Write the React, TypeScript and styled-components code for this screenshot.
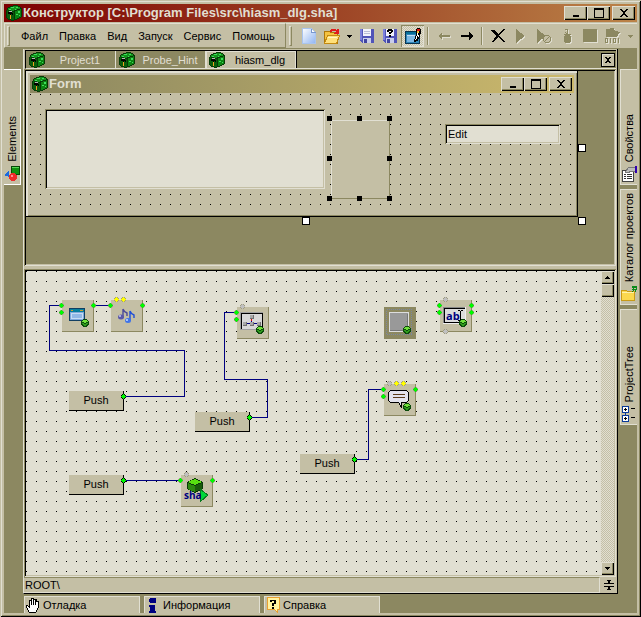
import React from "react";
import styled, { createGlobalStyle, css } from "styled-components";

const face = "#c4bfa5";
const light = "#e1dfd2";
const dark = "#8c8861";
const navy = "#000080";

const sunken = css`
  padding: 2px;
  box-shadow: inset 1px 1px ${dark}, inset -1px -1px ${light}, inset 2px 2px #000, inset -2px -2px ${face};
`;
const raised = css`
  background: ${face};
  box-shadow: inset 1px 1px ${light}, inset -1px -1px #000, inset -2px -2px ${dark};
`;

const GlobalStyle = createGlobalStyle`
  * { box-sizing: border-box; }
  body { margin: 0; background: ${face}; }
  body, button, input, textarea {
    font-family: "Liberation Sans", sans-serif;
    font-size: 11px;
    line-height: 16px;
    color: #000;
  }
  button { border: 0; padding: 0; margin: 0; background: none; }
  svg { display: block; flex: none; shape-rendering: crispEdges; }
`;

const Window = styled.div`
  display: flex;
  flex-direction: column;
  height: 100vh;
  min-height: 480px;
  padding: 4px;
  background: ${face};
  box-shadow: inset 1px 1px ${face}, inset -1px -1px #000, inset 2px 2px ${light}, inset -2px -2px ${dark};
`;
const TitleBar = styled.header<{ $inner?: boolean }>`
  display: flex;
  align-items: center;
  flex: none;
  height: 18px;
  gap: 1px;
  padding: 0 2px;
  color: ${light};
  background: ${(p) => (p.$inner
    ? "linear-gradient(90deg, #8c8861, #ccb96c)"
    : "linear-gradient(90deg, #7d0000, #bb8348)")};
`;
const Title = styled.h1`
  flex: 1;
  margin: 0;
  overflow: hidden;
  white-space: nowrap;
  font: bold 13px/18px "Liberation Sans", sans-serif;
`;
const CaptionButtons = styled.div`
  display: flex;
`;
const CaptionButton = styled.button`
  ${raised}
  display: grid;
  place-items: center;
  width: 23px;
  height: 14px;
  &:last-child { margin-left: 2px; }
`;

const ToolRow = styled.div`
  display: flex;
  flex: none;
  height: 27px;
  padding-top: 1px;
  border-bottom: 1px solid ${dark};
`;
const MenuBar = styled.nav`
  display: flex;
  align-items: center;
  flex: none;
  gap: 11px;
  width: 282px;
  border: 1px solid ${light};
  border-right-color: ${dark};
  border-bottom-color: ${dark};
`;
const Grip = styled.span`
  flex: none;
  width: 3px;
  height: 20px;
  margin: 0 0 0 2px;
  border: 1px solid ${light};
  border-right-color: ${dark};
  border-bottom-color: ${dark};
`;
const MenuItem = styled.button`
  padding-top: 1px;
  white-space: nowrap;
`;
const ToolBar = styled.div`
  display: flex;
  flex: 1;
  align-items: center;
  padding-left: 1px;
  border-top: 1px solid ${light};
  ${Grip} { margin-right: 5px; }
`;
const Tool = styled.button<{ $pressed?: boolean; $narrow?: boolean }>`
  display: grid;
  place-items: center;
  flex: none;
  width: ${(p) => (p.$narrow ? 12 : 23)}px;
  height: 22px;
  ${(p) => p.$pressed && css`
    background: repeating-conic-gradient(${light} 0 25%, ${face} 0 50%) 0 0 / 2px 2px;
    box-shadow: inset 1px 1px ${dark}, inset -1px -1px ${light};
  `}
`;
const Divider = styled.span`
  flex: none;
  width: 2px;
  height: 18px;
  margin: 0 3px;
  border-left: 1px solid ${dark};
  border-right: 1px solid ${light};
`;

const Body = styled.div`
  display: flex;
  flex: 1;
  min-height: 0;
  background: ${dark};
`;
const SideStrip = styled.aside<{ $right?: boolean }>`
  display: flex;
  flex-direction: column;
  flex: none;
  gap: 4px;
  width: 19px;
  padding: 20px ${(p) => (p.$right ? 0 : 2)}px 0 ${(p) => (p.$right ? 2 : 0)}px;
`;
const SideTab = styled.button<{ $right?: boolean }>`
  display: flex;
  flex-direction: column;
  align-items: center;
  justify-content: flex-end;
  gap: 4px;
  height: 116px;
  padding-bottom: 2px;
  background: ${face};
  border: 1px solid ${(p) => (p.$right ? light : "#fff")};
  border-${(p) => (p.$right ? "right" : "left")}: 0;
`;
const SideLabel = styled.span`
  writing-mode: vertical-rl;
  transform: rotate(180deg);
  white-space: nowrap;
`;
const Center = styled.div`
  display: flex;
  flex-direction: column;
  flex: 1;
  min-width: 0;
`;
const Dock = styled.main`
  display: flex;
  flex-direction: column;
  flex: 1;
  min-height: 0;
  background: ${face};
  border: 1px solid #000;
  border-top: 0;
  border-left-color: ${light};
`;
const TabBar = styled.div`
  display: flex;
  flex: none;
  align-items: center;
  height: 19px;
  margin: 1px 1px 0 1px;
  padding-right: 1px;
  background: ${dark};
  border: 1px solid #000;
  border-right: 0;
  border-bottom: 1px solid ${light};
`;
const DocTab = styled.button<{ $active?: boolean }>`
  display: flex;
  align-items: center;
  align-self: stretch;
  width: 90px;
  padding-left: 3px;
  color: ${(p) => (p.$active ? "#000" : light)};
  background: ${(p) => (p.$active ? face : dark)};
  border-right: 1px solid ${light};
  ${(p) => p.$active && css`box-shadow: inset 1px 1px ${light}, 1px 0 #000;`}
`;
const DocLabel = styled.span`
  flex: 1;
  text-align: center;
`;
const Spacer = styled.span`
  flex: 1;
`;
const CloseTab = styled.button`
  display: grid;
  place-items: center;
  width: 14px;
  height: 14px;
  background: ${face};
  border: 1px solid #000;
  box-shadow: inset 1px 1px ${light};
`;

const DesignerPane = styled.section`
  ${sunken}
  flex: none;
  height: 197px;
  margin-right: 1px;
  background: ${dark};
`;
const FormSurface = styled.div`
  position: relative;
  width: 552px;
  height: 146px;
  padding: 4px;
  background: ${face};
  box-shadow: inset -1px -1px #000, inset 2px 2px ${light}, inset -2px -2px ${dark};
`;
const FormArea = styled.div`
  position: relative;
  height: 119px;
  margin-top: 1px;
`;
const GridDots = styled.svg`
  width: 100%;
  height: 100%;
`;
type Box = { $x: number; $y: number; $w?: number; $h?: number };
const at = css<Box>`
  position: absolute;
  left: ${(p) => p.$x}px;
  top: ${(p) => p.$y}px;
  ${(p) => p.$w && `width: ${p.$w}px;`}
  ${(p) => p.$h && `height: ${p.$h}px;`}
`;
const Memo = styled.textarea<Box>`
  ${at}
  ${sunken}
  border: 0;
  outline: 0;
  resize: none;
  background: ${light};
`;
const Edit = styled.input<Box>`
  ${at}
  ${sunken}
  padding-left: 3px;
  border: 0;
  outline: 0;
  background: ${light};
`;
const PanelBox = styled.div<Box>`
  ${at}
  background: ${face};
  border: 1px solid ${light};
  border-right-color: ${dark};
  border-bottom-color: ${dark};
`;
const Handle = styled.i<Box & { $hollow?: boolean }>`
  ${at}
  width: ${(p) => (p.$hollow ? 8 : 5)}px;
  height: ${(p) => (p.$hollow ? 8 : 5)}px;
  background: ${(p) => (p.$hollow ? "#fff" : "#000")};
  border: 1px solid #000;
`;

const SchemePane = styled.section`
  ${sunken}
  display: flex;
  flex: 1;
  min-height: 0;
  margin: 3px 1px 0 0;
  background: ${light};
`;
const Scheme = styled.div`
  position: relative;
  flex: 1;
  min-width: 0;
  overflow: hidden;
`;
const Layer = styled.svg`
  position: absolute;
  inset: 0;
  width: 100%;
  height: 100%;
`;
const PushNode = styled.button<Box>`
  ${at}
  width: 55px;
  height: 20px;
  padding-bottom: 2px;
  background: ${face};
  border-right: 1px solid #000;
  border-bottom: 1px solid #000;
`;
const Node = styled.div<Box & { $selected?: boolean }>`
  ${at}
  width: 32px;
  height: 32px;
  background: ${(p) => (p.$selected ? dark : face)};
  border-right: 1px solid ${dark};
  border-bottom: 1px solid ${dark};
`;
const ScrollBar = styled.div`
  display: flex;
  flex-direction: column;
  flex: none;
  width: 13px;
  background: repeating-conic-gradient(${light} 0 25%, ${face} 0 50%) 0 0 / 2px 2px;
`;
const ScrollPart = styled.button`
  ${raised}
  display: grid;
  place-items: center;
  flex: none;
  height: 13px;
  &:last-child { margin-top: auto; }
`;
const StatusRow = styled.div`
  display: flex;
  flex: none;
  height: 16px;
`;
const Path = styled.div`
  flex: 1;
  line-height: 14px;
  padding-left: 1px;
  border-top: 1px solid ${dark};
  border-bottom: 1px solid ${light};
  border-right: 1px solid ${light};
`;
const SplitButton = styled.button`
  display: grid;
  place-items: center;
  width: 17px;
`;
const BottomTabs = styled.footer`
  display: flex;
  flex: none;
  gap: 4px;
  height: 19px;
  padding: 2px 0 0 1px;
`;
const BottomTab = styled.button`
  display: flex;
  align-items: center;
  gap: 2px;
  width: 116px;
  background: ${face};
  border: 1px solid ${light};
  border-bottom: 0;
`;

const Icon = ({ size = 16, children }: { size?: number; children: React.ReactNode }) => (
  <svg width={size} height={size} viewBox={`0 0 ${size} ${size}`} aria-hidden="true">{children}</svg>
);

const Cube = () => (
  <Icon>
    <path d="M4 1h3V0h5v1h2v1h1v1h1v9h-1v1h-2v1h-2v1H8v1H5v-1H2v-1H1v-1H0V5h1V3h1V2h2z" fill="#063a06" />
    <path d="M4 2h3V1h5v1h2v2h-3v1H8v1H5V5H2V3h2z" fill="#14921c" />
    <path d="M9 6h2V5h3V4h1v8h-2v1h-2v1H9z" fill="#0c8412" />
    <path d="M1 5h1v1h4v1h2v8H5v-1H2v-1H1z" fill="#0a5c0c" />
    <path d="M5 2h3v1H5zM10 2h2v1h-2zM9 4h1v1H9zM12 6h2v2h-2zM10 9h2v1h-2zM13 10h1v1h-1zM3 4h2v1H3z" fill="#3ce05c" />
    <path d="M2 7h4v1h1v2H6V9H5v5H4V9H2z" fill="#000" />
    <path d="M3 6h3v1H3z" fill="#b4bcb4" />
    <path d="M4 10h1v4H4z" fill="#f0a020" />
  </Icon>
);
const MinIcon = () => <Icon size={10}><path d="M2 7h6v2H2z" fill="#000" /></Icon>;
const MaxIcon = () => <Icon size={10}><path d="M.5 1h9M.5.5v9h9v-9z" fill="none" stroke="#000" /></Icon>;
const CloseIcon = () => (
  <Icon size={10}><path d="M1 1h2v1h1v1h2V2h1V1h2v1H8v1H7v1H6v2h1v1h1v1h1v1H7V8H6V7H4v1H3v1H1V8h1V7h1V6h1V4H3V3H2V2H1z" /></Icon>
);
const Caret = ({ color = "#000", up }: { color?: string; up?: boolean }) => (
  <Icon size={5}><path d={up ? "M2 1h1v1h1v1h1v1H0V3h1V2h1z" : "M0 1h5v1H4v1H3v1H2V3H1V2H0z"} fill={color} /></Icon>
);

const Floppy = ({ query }: { query?: boolean }) => (
  <Icon>
    <path d="M1 1h14v14H3l-2-2z" fill="#5054b8" />
    <path d="M1 1h2v11H1z" fill="#7c80dc" />
    <path d="M4 1h8v7H4z" fill="#f2f2fa" />
    <path d="M4 10h8v5H4z" fill="#c9cdea" />
    <path d="M5 11h3v4H5z" fill="#4044a0" />
    {query
      ? <path d="M5 2h1V1h4v1h1v2h-1v1H9v1H7V4h2V3H7v1H5zM7 7h2v2H7z" fill="#000" />
      : <path d="M5 3.500h6M5 5.500h6" stroke="#b9bdd8" />}
  </Icon>
);
const Ghost = ({ children }: { children: React.ReactNode }) => (
  <Icon>
    <g transform="translate(1 1)" fill={light} stroke={light}>{children}</g>
    <g fill={dark} stroke={dark}>{children}</g>
  </Icon>
);

const tools: { name: string; icon?: React.ReactNode; pressed?: boolean; narrow?: boolean }[] = [
  {
    name: "Создать",
    icon: (
      <Icon>
        <defs>
          <linearGradient id="sheet" x2="1" y2="1"><stop stopColor="#fff" /><stop offset="1" stopColor="#8fb4f2" /></linearGradient>
        </defs>
        <path d="M1.500.5h9l4 4v11h-13z" fill="url(#sheet)" stroke="#a9c4ee" />
        <path d="M10.500 1v3.500h4" fill="#fff" stroke="#7898d0" />
      </Icon>
    ),
  },
  {
    name: "Открыть",
    icon: (
      <Icon>
        <path d="M.5 3.500h5l1 1h7v11H.5z" fill="#f5c340" stroke="#b07808" />
        <path d="M3.500 7.500h12l-3 8H.5z" fill="#ffe07a" stroke="#c48a10" />
        <path d="M4 9h9v1H4z" fill="#fff4c0" />
        <path d="M6 4V2h1V1h5v1h1V1h2v5h-5V5h1V4h1V3H8v1z" fill="#e21c1c" />
      </Icon>
    ),
  },
  { name: "Недавние", narrow: true, icon: <Caret /> },
  { name: "Сохранить", icon: <Floppy /> },
  { name: "Сохранить как", icon: <Floppy query /> },
  {
    name: "Редактор",
    pressed: true,
    icon: (
      <Icon>
        <path d="M.5 3.500h14v12H.5z" fill="#2f86b8" stroke="#08334f" />
        <path d="M1 4h13v2H1z" fill="#07709a" />
        <path d="M2 7h8v7H2z" fill="#7db8e4" />
        <path d="M2 7h8v1H2z" fill="#c4e0f6" />
        <path d="M11 1h1V0h3v1h1v5h-1v3h-1v2h-1v2h-2v1H9v-3h1V8h1z" fill="#000" />
        <path d="M12 5h1v3h-1v3h-1v1h-1v-1h1V8h1z" fill="#fff" />
        <path d="M13 7h1v2h-1z" fill="#fff" />
        <path d="M12 1h3v2h-3z" fill="#e01010" />
        <path d="M12 3h2v2h-2z" fill="#f4c030" />
      </Icon>
    ),
  },
  { name: "" },
  { name: "Отменить", icon: <Ghost><path d="M2 8 6 4v3h8v2H6v3z" stroke="none" /></Ghost> },
  { name: "Вернуть", icon: <Icon><path d="M14 8 10 4v3H2v2h8v3z" /></Icon> },
  { name: "" },
  { name: "Удалить", icon: <Icon><path d="M1 2h3l4 4 5-5h2L9 7l6 7h-2L8 9l-4 5H2l4-6z" /></Icon> },
  { name: "Запустить", icon: <Ghost><path d="M3 1v14l9-7z" stroke="none" /></Ghost> },
  {
    name: "Компилировать",
    icon: (
      <Ghost>
        <path d="M1 1v14l9-7z" stroke="none" />
        <circle cx="11" cy="11" r="3.5" fill={face} />
        <path d="m9 13 4-4" />
      </Ghost>
    ),
  },
  {
    name: "Отладить",
    icon: (
      <Ghost>
        <path d="M6 1.500h2.500V5" fill="none" />
        <circle cx="8.5" cy="11" r="4" stroke="none" />
        <path d="M5 6.500h7M6 4l5 4" />
      </Ghost>
    ),
  },
  { name: "Остановить", icon: <Ghost><path d="M1 1h14v13H1z" stroke="none" /></Ghost> },
  {
    name: "Код",
    icon: (
      <Ghost>
        <path d="M1 1h3l1-1h4l1 3h3v1h2l-3 5H1z" stroke="none" />
        <path d="M.5 10.500h2v4h-2zM5.500 10v5M8.500 10.500h2v4h-2zM13.500 10v5" fill="none" />
      </Ghost>
    ),
  },
  { name: "Ещё", narrow: true, icon: <Caret color={dark} /> },
];

const Dots = ({ id, children }: { id: string; children?: React.ReactNode }) => (
  <>
    <defs>
      <pattern id={id} width="10" height="10" patternUnits="userSpaceOnUse">
        <path d="M0 0h1v1H0z" fill="#000" />
      </pattern>
    </defs>
    <rect width="100%" height="100%" fill={`url(#${id})`} />
    {children}
  </>
);

const Gem = ({ x, y }: { x: number; y: number }) => (
  <g transform={`translate(${x} ${y})`}>
    <path d="M2 0h4v1h1v1h1v4H7v1H6v1H2V7H1V6H0V2h1V1h1z" fill="#0b4a0b" />
    <path d="M2 1h4v1h1v1H5v1H3V3H1V2h1z" fill="#6fe03a" />
    <path d="M1 4h2v1h2V4h2v1H6v1H5v1H3V6H2V5H1z" fill="#2f9d1c" />
  </g>
);
const NodeArt = ({ children }: { children: React.ReactNode }) => (
  <svg width="32" height="32" viewBox="0 0 32 32" aria-hidden="true">{children}</svg>
);

const nodes: { x: number; y: number; selected?: boolean; art: React.ReactNode }[] = [
  {
    x: 36, y: 29,
    art: (
      <>
        <path d="M7.500 8.500h15v12h-15z" fill="#7fa9dc" stroke="#123f62" />
        <path d="M8 9h14v3H8z" fill="#087f9c" />
        <path d="M9 10.500h2M18 10.500h3" stroke="#c8a030" />
        <path d="M9.500 13.500h11v5h-11z" fill="#91b8e6" stroke="#c6dcf4" />
        <Gem x={19} y={19} />
      </>
    ),
  },
  {
    x: 85, y: 29,
    art: (
      <g shapeRendering="geometricPrecision">
        <path d="M12 9v9M12 9q1 3 4 4v3" fill="none" stroke="#4a4a9a" strokeWidth="1.4" />
        <ellipse cx="10" cy="17" rx="3" ry="2.500" fill="#5a58a8" />
        <path d="M19 11v10M19 11q1 3 4 4v3" fill="none" stroke="#1f4fd8" strokeWidth="1.4" />
        <ellipse cx="17" cy="20.500" rx="3" ry="2.500" fill="#3f74e8" />
        <circle cx="9" cy="16" r="1" fill="#c8c8f0" />
        <circle cx="16" cy="20" r="1" fill="#c8dcff" />
      </g>
    ),
  },
  {
    x: 211, y: 36,
    art: (
      <>
        <path d="M3 5h23v18H3z" fill="#a0a0a0" />
        <path d="M4 6h22v16H4z" fill="#000" />
        <path d="M5 7h20v15H5z" fill="#d8d8d8" />
        <path d="M14.500 12v5M8 16.500h14" stroke="#000080" />
        <path d="M14.500 12v2" stroke="#e00000" />
        <path d="M13 8h4v4h-4zM6 15h4v4H6zM13 15h4v4h-4zM20 15h4v4h-4z" fill="#707070" />
        <path d="M13 8h3v3h-3zM6 15h3v3H6zM13 15h3v3h-3zM20 15h3v3h-3z" fill="#a8a8a8" />
        <Gem x={19} y={19} />
      </>
    ),
  },
  {
    x: 358, y: 36, selected: true,
    art: (
      <>
        <path d="M2.500 2.500h25v25h-25z" fill="none" stroke="#7c88a0" strokeDasharray="1 1" />
        <path d="M5.500 5.500h19v19h-19z" fill="#999" stroke="#ddd" />
        <path d="M23.500 7v16.500H6" fill="none" stroke="#777" />
        <Gem x={19} y={19} />
      </>
    ),
  },
  {
    x: 414, y: 29,
    art: (
      <>
        <path d="M3 7h23v17H3z" fill="#eee" />
        <path d="M3 7h22v16H3z" fill="#888" />
        <path d="M4 8h21v15H4z" fill="#000" />
        <path d="M5 9h20v13H5z" fill="#dcdcdc" />
        <text x="6" y="20" fontFamily="Open Sans" fontSize="11" fontWeight="bold" fill={navy}>ab</text>
        <path d="M18 10.500h2m1 0h2M20.500 11v9M18 20.500h2m1 0h2" stroke="#000" />
        <Gem x={19} y={19} />
      </>
    ),
  },
  {
    x: 358, y: 113,
    art: (
      <>
        <path d="M6.500 6.500h16l2 2v8l-2 2h-5v5l-3-5h-8l-2-2v-8z" fill="#e3e3ec" stroke="#000" />
        <path d="M9 10.500h12M9 13.500h12" stroke="#5a3a18" />
        <Gem x={19} y={19} />
      </>
    ),
  },
  {
    x: 155, y: 204,
    art: (
      <>
        <path d="M14 3 22 7v7l-8 4-8-4V7z" fill="#0a3a0a" />
        <path d="M14 4 21 7l-7 3-7-3z" fill="#58e010" />
        <path d="M7 8l7 3v6l-7-3z" fill="#2d8a10" />
        <path d="M14 11l7-3v6l-7 3z" fill="#1a5a0c" />
        <path d="M19 14l8 6-8 7z" fill="#00d83a" stroke="#0a7a20" />
        <text x="3" y="24" fontFamily="Open Sans" fontSize="10" fontWeight="bold" fill={navy}>sha</text>
      </>
    ),
  },
];
const pushes = [[43, 120], [169, 141], [274, 183], [43, 204]];
const wires = [
  "M35 34H23V79H158V125H97",
  "M67 34H84",
  "M210 41H198V108H241V146H223",
  "M357 118H342V188H328",
  "M97 209H154",
];
type Port = [number, number, string, string?];
const green = "#00f800";
const yellow = "#ffff00";
const silver = "#c0c0c0";
const ports: Port[] = [
  [35, 34, green], [35, 41, green], [67, 34, green],
  [84, 34, green], [116, 34, green], [90, 28, yellow], [97, 28, yellow],
  [216, 35, silver], [210, 41, green], [210, 48, green],
  [419, 28, silver], [419, 60, silver], [413, 34, green], [413, 41, green], [445, 34, green], [445, 41, green],
  [363, 112, silver], [370, 112, yellow], [377, 112, yellow], [357, 118, green], [357, 125, green], [389, 118, green],
  [160, 203, silver], [154, 209, green], [186, 209, green],
  [97, 125, green, "#000"], [223, 146, green, "#000"], [328, 188, green, "#000"], [97, 209, green, "#000"],
];
const handles = [[297, 22], [327, 22], [357, 22], [297, 62], [357, 62], [297, 102], [327, 102], [357, 102]];

const Captions = () => (
  <CaptionButtons>
    <CaptionButton aria-label="Свернуть"><MinIcon /></CaptionButton>
    <CaptionButton aria-label="Развернуть"><MaxIcon /></CaptionButton>
    <CaptionButton aria-label="Закрыть"><CloseIcon /></CaptionButton>
  </CaptionButtons>
);

export default function App() {
  return (
    <Window>
      <GlobalStyle />
      <TitleBar>
        <Cube />
        <Title>Конструктор [C:\Program Files\src\hiasm_dlg.sha]</Title>
        <Captions />
      </TitleBar>
      <ToolRow>
        <MenuBar>
          <Grip />
          {["Файл", "Правка", "Вид", "Запуск", "Сервис", "Помощь"].map((m) => <MenuItem key={m}>{m}</MenuItem>)}
        </MenuBar>
        <ToolBar>
          <Grip />
          {tools.map((t, i) => (t.icon
            ? <Tool key={i} aria-label={t.name} $pressed={t.pressed} $narrow={t.narrow}>{t.icon}</Tool>
            : <Divider key={i} />))}
        </ToolBar>
      </ToolRow>
      <Body>
        <SideStrip>
          <SideTab>
            <SideLabel>Elements</SideLabel>
            <Icon>
              <path d="M7.500.5h8v8h-8z" fill="#109010" stroke="#064806" />
              <path d="M8 1.500h7" stroke="#58d858" />
              <path d="M0 9 5 4v7z" fill="#1c6be0" />
              <circle cx="9" cy="11" r="4" fill="#ee2a2a" />
              <circle cx="8" cy="10" r="1.200" fill="#ff9090" />
            </Icon>
          </SideTab>
        </SideStrip>
        <Center>
          <Dock>
            <TabBar>
              <DocTab><Cube /><DocLabel>Project1</DocLabel></DocTab>
              <DocTab><Cube /><DocLabel>Probe_Hint</DocLabel></DocTab>
              <DocTab $active><Cube /><DocLabel>hiasm_dlg</DocLabel></DocTab>
              <Spacer />
              <CloseTab aria-label="Закрыть вкладку">
                <Icon size={6}><path d="M0 0h2v1h2V0h2v1H5v1H4v2h1v1h1v1H4V5H2v1H0V5h1V4h1V2H1V1H0z" /></Icon>
              </CloseTab>
            </TabBar>
            <DesignerPane>
              <FormSurface>
                <TitleBar $inner as="div">
                  <Cube />
                  <Title as="h2">Form</Title>
                  <Captions />
                </TitleBar>
                <FormArea>
                  <GridDots><Dots id="form-dots" /></GridDots>
                  <Memo aria-label="Memo" $x={15} $y={15} $w={280} $h={80} />
                  <PanelBox $x={301} $y={26} $w={59} $h={79} />
                  <Edit aria-label="Edit" defaultValue="Edit" $x={415} $y={30} $w={115} $h={20} />
                  {handles.map(([x, y]) => <Handle key={`${x}-${y}`} $x={x} $y={y} />)}
                </FormArea>
                <Handle $hollow $x={552} $y={73} />
                <Handle $hollow $x={552} $y={146} />
                <Handle $hollow $x={276} $y={146} />
              </FormSurface>
            </DesignerPane>
            <SchemePane>
              <Scheme>
                <Layer aria-hidden="true">
                  <Dots id="scheme-dots">
                    {wires.map((d) => <path key={d} d={d} transform="translate(.5 .5)" fill="none" stroke={navy} />)}
                  </Dots>
                </Layer>
                {nodes.map((n) => (
                  <Node key={`${n.x}-${n.y}`} $x={n.x} $y={n.y} $selected={n.selected}><NodeArt>{n.art}</NodeArt></Node>
                ))}
                {pushes.map(([x, y]) => <PushNode key={`${x}-${y}`} $x={x} $y={y}>Push</PushNode>)}
                <Layer aria-hidden="true" pointerEvents="none">
                  {ports.map(([x, y, fill, edge]) => (
                    <g key={`${x}-${y}`} transform={`translate(${x} ${y})`}>
                      <path d="M-1-2h3v1h1v3H2v1h-3V2h-1v-3h1z" fill={edge ?? "#a09c80"} />
                      <path d="M0-2h1v1h1v1h1v1H2v1H1v1H0V2h-1V1h-1V0h1v-1h1z" fill={fill} />
                    </g>
                  ))}
                </Layer>
              </Scheme>
              <ScrollBar>
                <ScrollPart aria-label="Вверх"><Caret up /></ScrollPart>
                <ScrollPart aria-label="Ползунок" />
                <ScrollPart aria-label="Вниз"><Caret /></ScrollPart>
              </ScrollBar>
            </SchemePane>
            <StatusRow>
              <Path>ROOT\</Path>
              <SplitButton aria-label="Разделить">
                <Icon size={10}><path d="M0 3h10v1H0zM0 6h10v1H0zM3 0h4v1H6v2H4V1H3zM4 7h2v2h1v1H3V9h1z" /></Icon>
              </SplitButton>
            </StatusRow>
          </Dock>
          <BottomTabs>
            <BottomTab>
              <Icon><path d="M4 15 1 9l1-1 2 2V3h2V1h2v1h3v2h2v7l-2 4z" fill="#fff" stroke="#000" /><path d="M6.500 3v5M8.500 2v6M10.500 3v5" stroke="#000" /></Icon>
              Отладка
            </BottomTab>
            <BottomTab>
              <Icon><path d="M5 1h5l1 1v3l-1 1H5L4 5V2zM4 8h6v6h1v2H4v-2h1v-4H4z" fill={navy} /></Icon>
              Информация
            </BottomTab>
            <BottomTab>
              <Icon>
                <path d="M2.500.5h12v12h-2v3l-3-3h-7z" fill="#fff3a0" stroke="#e8a030" />
                <path d="M5 3h6v4H9v2H7V6h2V4H7v1H5zM7 10h2v2H7z" fill="#000" />
              </Icon>
              Справка
            </BottomTab>
          </BottomTabs>
        </Center>
        <SideStrip $right>
          <SideTab $right>
            <SideLabel>Свойства</SideLabel>
            <Icon>
              <path d="M1.500 4.500h11v11h-11z" fill="#fff" stroke="#444" />
              <path d="M3 8.500h2m1 0h5M3 10.500h2m1 0h5M3 12.500h2m1 0h5" stroke="#333" />
              <path d="M4 6 8 1h6v5l-4-1-3 2z" fill="#bbb" stroke="#777" />
              <path d="M14 0h2v7h-2z" fill="#3000b0" />
            </Icon>
          </SideTab>
          <SideTab $right>
            <SideLabel>Каталог проектов</SideLabel>
            <Icon>
              <path d="M.5 4.500h5l1 1h7v9H.5z" fill="#fbd84e" stroke="#c89a18" />
              <path d="M1 6.500h12" stroke="#fff2a8" />
              <path d="M11 0h5v4h-1v2h-1V4h-1v1h-1v1h-1V5h1V4h-1V3h1V2h-1z" fill="#0a8a1a" />
              <path d="M13 2h2v1h-2z" fill={face} />
            </Icon>
          </SideTab>
          <SideTab $right>
            <SideLabel>ProjectTree</SideLabel>
            <Icon>
              <path d="M1 0h7v7H1zM1 9h7v7H1zM4 7h1v2H4z" fill="#0a3a9a" />
              <path d="M2 1h5v5H2zM2 10h5v5H2z" fill="#fff" />
              <path d="M4.500 2v3M3 3.500h3M4.500 11v3M3 12.500h3M10 2.500h4M10 11.500h4" stroke="#000" />
            </Icon>
          </SideTab>
        </SideStrip>
      </Body>
    </Window>
  );
}
